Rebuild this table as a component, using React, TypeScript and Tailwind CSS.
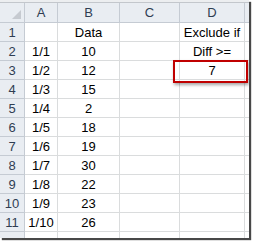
import React from "react";

const colA = ["", "1/1", "1/2", "1/3", "1/4", "1/5", "1/6", "1/7", "1/8", "1/9", "1/10"];
const colB = ["Data", "10", "12", "15", "2", "18", "19", "30", "22", "23", "26"];
const colD = ["Exclude if", "Diff >=", "7", "", "", "", "", "", "", "", ""];

const headCell = "h-[20px] flex items-center justify-center border-r border-b border-[#c5cbd3] bg-[#e9edf2] text-[#2f3d52]";
const rowHead = "h-[19px] flex items-center justify-center border-r border-b border-[#c5cbd3] bg-[#e9edf2] text-[#2f3d52]";
const cell = "h-[19px] flex items-center justify-center border-r border-b border-[#dadcdd] text-black";

export default function App() {
  return (
    <div className="w-[253px] h-[242px] bg-white overflow-hidden" style={{ fontFamily: '"Liberation Sans", Arial, sans-serif' }}>
      <div className="relative w-[249px] h-[238px] bg-white shadow-[2px_2px_1px_rgba(40,40,40,0.85)] overflow-hidden text-[13px] leading-none">
        {/* formula bar edge */}
        <div className="h-[3px] bg-[#eceef0] border-b border-[#c3c7cc]" />

        <div className="grid grid-cols-[25px_33px_62px_60px_65px_10px]">
          {/* column headers */}
          <div className={`${headCell} relative`}>
            <div className="absolute right-[3px] bottom-[3px] w-0 h-0 border-l-[9px] border-l-transparent border-b-[9px] border-b-[#c6cad0]" />
          </div>
          <div className={headCell}>A</div>
          <div className={headCell}>B</div>
          <div className={headCell}>C</div>
          <div className={headCell}>D</div>
          <div className={`${headCell} border-r-0`} />

          {colA.map((a, i) => (
            <React.Fragment key={i}>
              <div className={rowHead}>{i + 1}</div>
              <div className={cell}>{a}</div>
              <div className={cell}>{colB[i]}</div>
              <div className={cell} />
              <div className={cell}>{colD[i]}</div>
              <div className={`${cell} border-r-0`} />
            </React.Fragment>
          ))}

          {/* partial row 12 */}
          <div className="h-[6px] border-r border-[#c5cbd3] bg-[#e9edf2]" />
          <div className="h-[6px] border-r border-[#dadcdd]" />
          <div className="h-[6px] border-r border-[#dadcdd]" />
          <div className="h-[6px] border-r border-[#dadcdd]" />
          <div className="h-[6px] border-r border-[#dadcdd]" />
          <div className="h-[6px]" />
        </div>

        {/* highlighted threshold cell */}
        <div className="absolute left-[173px] top-[60px] w-[75px] h-[23px] border-2 border-[#c00000] shadow-[1px_2px_3px_rgba(0,0,0,0.35)]" />
      </div>
    </div>
  );
}
